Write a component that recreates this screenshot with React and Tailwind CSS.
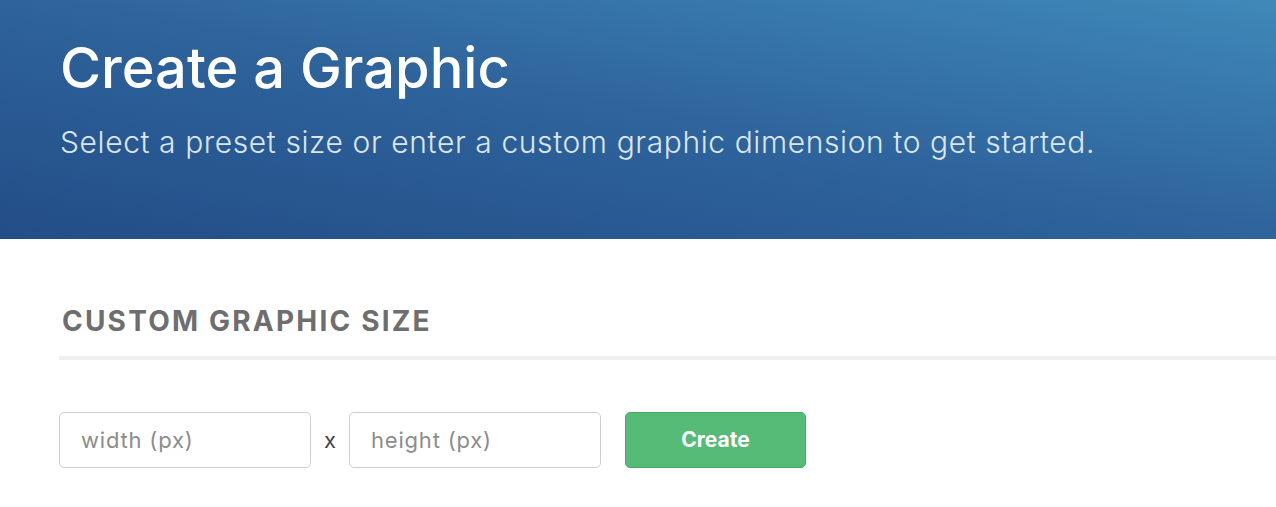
export default function App() {
  return (
    <div className="min-h-[507px] bg-white font-['Inter','Lato',sans-serif]">
      <header className="h-[239px] bg-[linear-gradient(to_top_right,#234d87,#2e639b_50%,#3f89b9)] px-[60px] pt-[36px]">
        <h1 className="text-[56px] leading-[64px] font-medium text-white">Create a Graphic</h1>
        <p className="mt-[22px] text-[30px] leading-[40px] font-light tracking-[0.6px] text-[#dbe6f1]">
          Select a preset size or enter a custom graphic dimension to get started.
        </p>
      </header>

      <section className="pl-[59px] pt-[65px]">
        <h2 className="pl-[3px] text-[28px] leading-[34px] font-bold uppercase tracking-[2.2px] text-[#6e6e6e]">
          Custom Graphic Size
        </h2>
        <div className="mt-[18px] h-[4px] bg-[#f0f0f4]" />

        <div className="mt-[52px] flex items-center">
          <input
            className="h-[56px] w-[252px] rounded-[5px] border border-[#cfcfcf] px-[21px] text-[22px] tracking-[0.8px] text-[#444] placeholder:text-[#8c8c8c] outline-none"
            placeholder="width (px)"
          />
          <span className="mx-[13px] text-[22px] text-[#444]">x</span>
          <input
            className="h-[56px] w-[252px] rounded-[5px] border border-[#cfcfcf] px-[21px] text-[22px] tracking-[0.8px] text-[#444] placeholder:text-[#8c8c8c] outline-none"
            placeholder="height (px)"
          />
          <button className="ml-[24px] h-[56px] w-[181px] rounded-[5px] border border-[#4aa869] bg-[#56bb77] text-[21px] font-bold text-white">
            Create
          </button>
        </div>
      </section>
    </div>
  );
}
